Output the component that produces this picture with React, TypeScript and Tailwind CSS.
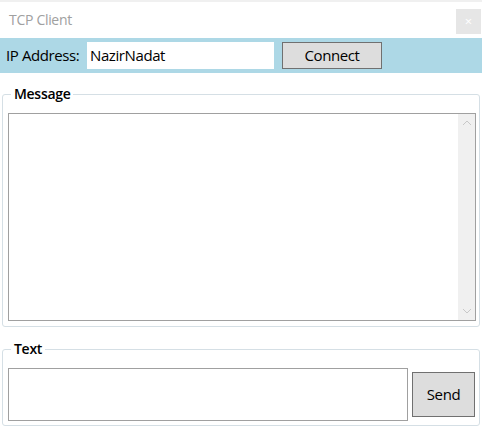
import React from 'react';

const font = { fontFamily: '"Open Sans", "Noto Sans", sans-serif' };

function ScrollArrow({ up }: { up?: boolean }) {
  return (
    <svg width="10" height="6" viewBox="0 0 10 6" className="text-[#c8c8c8]">
      <path d={up ? 'M1 5 L5 1 L9 5' : 'M1 1 L5 5 L9 1'} fill="none" stroke="currentColor" strokeWidth="1" />
    </svg>
  );
}

export default function App() {
  return (
    <div className="w-[482px] h-[429px] bg-white border-t-2 border-[#f0f0f0] text-black overflow-hidden" style={font}>
      {/* title */}
      <div className="flex items-start justify-between h-[36px] pl-[9px] pr-[1px] pt-[7px]">
        <span className="text-[14px] text-[#a0a0a0] tracking-[-0.3px]">TCP Client</span>
        <div className="w-[25px] h-[25px] bg-[#e6e6e6] flex items-center justify-center text-white text-[13px]">×</div>
      </div>

      {/* address bar */}
      <div className="h-[35px] bg-[#add8e6] flex items-center pl-[6px]">
        <span className="text-[15px] tracking-[-0.4px] w-[81px]">IP Address:</span>
        <div className="w-[187px] h-[27px] bg-white flex items-center pl-[3px] text-[15px] tracking-[-0.4px]">NazirNadat</div>
        <button className="ml-[8px] w-[100px] h-[27px] bg-[#dddddd] border border-[#707070] text-[15px] tracking-[-0.4px] flex items-center justify-center">
          Connect
        </button>
      </div>

      {/* message group */}
      <div className="relative mx-[2px] mt-[21px] h-[233px] border border-[#d5dfe5] rounded-[3px]">
        <span className="absolute -top-[11px] left-[8px] bg-white px-[3px] text-[14px] font-semibold leading-[20px] tracking-[-0.3px]">Message</span>
        <div className="absolute left-[5px] top-[18px] w-[468px] h-[208px] border border-[#a0a0a0] bg-white flex justify-end">
          <div className="w-[17px] h-full bg-[#f0f0f0] flex flex-col justify-between items-center py-[6px]">
            <ScrollArrow up />
            <ScrollArrow />
          </div>
        </div>
      </div>

      {/* text group */}
      <div className="relative mx-[2px] mt-[22px] h-[77px] border border-[#d5dfe5] rounded-[3px]">
        <span className="absolute -top-[11px] left-[8px] bg-white px-[3px] text-[14px] font-semibold leading-[20px] tracking-[-0.3px]">Text</span>
        <div className="absolute left-[5px] top-[18px] flex items-center gap-[4px]">
          <div className="w-[400px] h-[53px] border border-[#a0a0a0] bg-white" />
          <button className="w-[63px] h-[45px] bg-[#dddddd] border border-[#707070] text-[15px] tracking-[-0.4px] flex items-center justify-center">
            Send
          </button>
        </div>
      </div>
    </div>
  );
}
